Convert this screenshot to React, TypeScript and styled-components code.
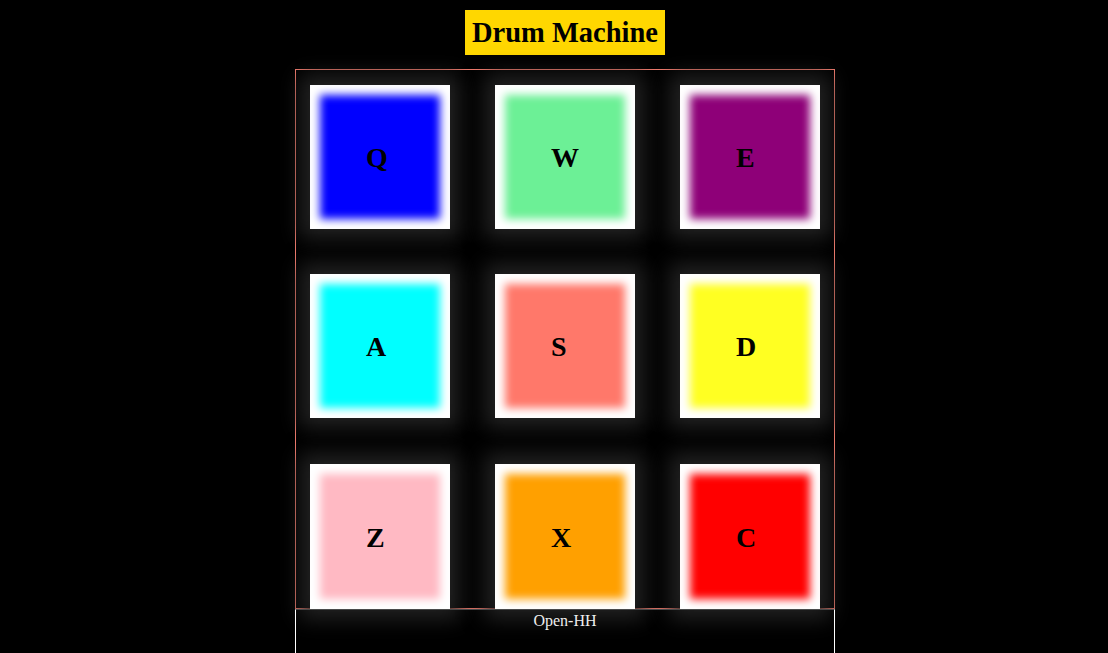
import styled, { createGlobalStyle } from 'styled-components'

const GlobalStyle = createGlobalStyle`
	html, body {
		margin: 0;
		background: #000;
		font-family: "Liberation Serif", "Times New Roman", serif;
	}
`

const Page = styled.div`
	display: flex;
	flex-direction: column;
	align-items: center;
	padding: 10px 0 0 22px;
`

const Title = styled.h1`
	margin: 0 0 14px;
	width: 200px;
	height: 45px;
	line-height: 45px;
	text-align: center;
	background: #ffd700;
	color: #000;
	font-size: 28.5px;
	font-weight: bold;
`

const Machine = styled.div`
	box-sizing: border-box;
	width: 540px;
	height: 540px;
	padding: 15px 14px 0;
	border: 1px solid #fa8072;
	display: grid;
	grid-template-columns: repeat(3, 140px);
	grid-template-rows: 144px 144px 145px;
	justify-content: space-between;
	row-gap: 45px;
`

const Pad = styled.div<{ $color: string }>`
	display: flex;
	align-items: center;
	padding: 2px 0 0 56px;
	background: ${props => props.$color};
	box-shadow: inset 0 0 9px 10px #fff, 0 0 20px 10px #222;
	color: #000;
	font-size: 28px;
	font-weight: bold;
	cursor: pointer;

	&:nth-child(n + 7) {
		margin-top: 1px;
		margin-bottom: -1px;
	}
`

const Display = styled.div`
	box-sizing: border-box;
	width: 540px;
	height: 60px;
	padding-top: 2px;
	border-left: 1px solid #fff;
	border-right: 1px solid #fff;
	border-top: 1px solid #4a4a4a;
	color: #eee;
	font-size: 16px;
	text-align: center;
	line-height: 18px;
`

const pads = [
	{ key: 'Q', color: '#0000ff' },
	{ key: 'W', color: '#6cf096' },
	{ key: 'E', color: '#8e0078' },
	{ key: 'A', color: '#00ffff' },
	{ key: 'S', color: '#ff786a' },
	{ key: 'D', color: '#ffff22' },
	{ key: 'Z', color: '#ffb9c3' },
	{ key: 'X', color: '#ffa000' },
	{ key: 'C', color: '#ff0000' },
]

export default function App() {
	return (
		<>
			<GlobalStyle />
			<Page>
				<Title>Drum Machine</Title>
				<Machine>
					{pads.map(pad => (
						<Pad key={pad.key} $color={pad.color}>
							{pad.key}
						</Pad>
					))}
				</Machine>
				<Display>Open-HH</Display>
			</Page>
		</>
	)
}
